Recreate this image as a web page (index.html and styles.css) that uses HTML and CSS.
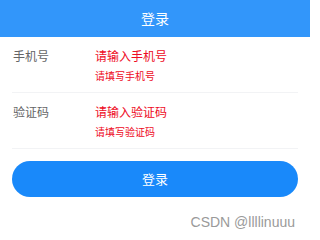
FILE: index.html
```html
<!DOCTYPE html>
<html lang="zh-CN">
<head>
<meta charset="utf-8">
<title>登录</title>
<link rel="stylesheet" href="styles.css">
</head>
<body>
<div class="page">
  <header class="nav">登录</header>
  <div class="field">
    <div class="row">
      <span class="label">手机号</span>
      <span class="placeholder">请输入手机号</span>
    </div>
    <div class="error">请填写手机号</div>
  </div>
  <div class="field">
    <div class="row">
      <span class="label">验证码</span>
      <span class="placeholder">请输入验证码</span>
    </div>
    <div class="error">请填写验证码</div>
  </div>
  <div class="btn">登录</div>
  <div class="mark">CSDN @llllinuuu</div>
</div>
</body>
</html>
```
FILE: styles.css
```css
html, body {
  margin: 0;
  padding: 0;
  background: #fff;
}
body {
  font-family: "Noto Sans CJK SC", "Noto Sans", sans-serif;
}
.page {
  width: 310px;
}
.nav {
  height: 37px;
  background: #3296fa;
  color: #fff;
  font-size: 14px;
  line-height: 37px;
  text-align: center;
}
.field {
  margin: 0 12px;
  height: 55px;
  padding-top: 10px;
  box-sizing: content-box;
  height: 45px;
  border-bottom: 1px solid #f2f3f5;
}
.row {
  display: flex;
  font-size: 12px;
  line-height: 18px;
}
.label {
  width: 82px;
  padding-left: 1px;
  color: #646566;
}
.placeholder {
  color: #ee0a24;
}
.error {
  margin-left: 83px;
  margin-top: 4px;
  font-size: 10px;
  line-height: 14px;
  color: #ee0a24;
}
.btn {
  margin: 12px 12px 0;
  height: 36px;
  border-radius: 18px;
  background: #1989fa;
  color: #fff;
  font-size: 13px;
  line-height: 36px;
  text-align: center;
}
.mark {
  margin-top: 17px;
  padding-right: 15px;
  text-align: right;
  font-family: "Liberation Sans", Arial, sans-serif;
  font-size: 14px;
  line-height: 16px;
  color: #9a9a9a;
}
```
